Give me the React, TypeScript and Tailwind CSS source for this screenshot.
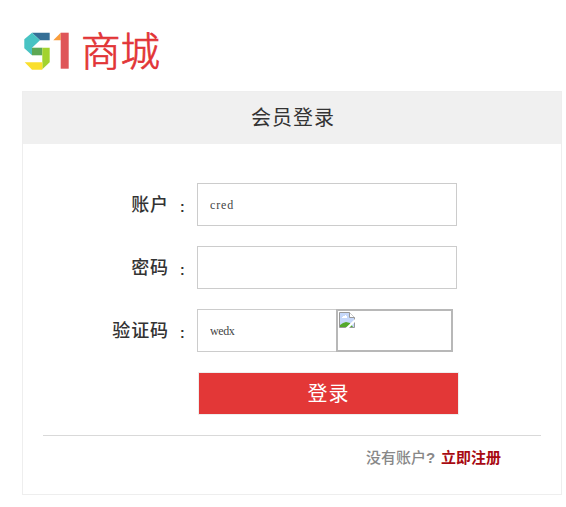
import React from "react";

const CJK = "font-['Liberation_Sans','Noto_Sans_CJK_SC',sans-serif]";

function Logo() {
  return (
    <svg width="146" height="48" viewBox="0 0 146 48" className="block">
      <polygon points="10,4.7 27.7,4.7 27.7,12.3 18,12.3" fill="#356f96" />
      <polygon points="10,4.7 18,12.3 10,19.7 10,27.3 2.3,20.3 2.3,11.3" fill="#48c3c3" />
      <rect x="10" y="19.7" width="10.3" height="7.6" fill="#5da854" />
      <polygon points="20.3,19.7 27.7,19.7 27.7,34.3 20.3,41.3" fill="#a2d32f" />
      <polygon points="2.7,34.3 20.3,34.3 20.3,41.7 10,41.7" fill="#fadf2c" />
      <polygon points="31.3,12.3 38.7,4.7 38.7,12.3" fill="#f99d3c" />
      <rect x="38.7" y="4.7" width="8" height="36" fill="#df5659" />
      <text
        x="59"
        y="37.5"
        fontSize="39.5"
        fontWeight="300"
        textLength="79"
        fill="#e23436"
        stroke="#e23436"
        strokeWidth="0.7"
        className={CJK}
      >
        商城
      </text>
    </svg>
  );
}

function Field({ label, children }: { label: string; children: React.ReactNode }) {
  return (
    <div className="flex h-[43px]">
      <div className="flex w-[146px] justify-end pt-[9px] text-[18px] leading-[27px] font-medium tracking-[0.9px] text-[#333]">
        {label}
      </div>
      <div className="w-[28px] pl-[11px] pt-[11px] text-[14px] leading-[27px] font-bold text-[#333]">:</div>
      {children}
    </div>
  );
}

function BrokenImage() {
  return (
    <div className="h-[43px] w-[117px] border-2 border-[#b8b8b8] p-px">
      <svg width="16" height="16" viewBox="0 0 16 16">
        <path d="M.5 .5h10l5 5v10H.5z" fill="#c6d8fa" stroke="#999" />
        <path d="M10.5 .5v5h5" fill="#fff" stroke="#999" />
        <path d="M3 6V5h1V4h2V3h1v1h1v2z" fill="#fff" />
        <path d="M1 15v-2l3-2 3-1 4 1 3 4z" fill="#54a92c" />
        <path d="M6.5 16L16 7v3l-6 6z" fill="#fff" />
      </svg>
    </div>
  );
}

export default function App() {
  return (
    <div className={`h-[507px] w-[566px] overflow-hidden bg-white pl-[22px] pt-[28px] ${CJK}`}>
      <div className="h-[63px]">
        <Logo />
      </div>
      <main className="h-[404px] w-[540px] border border-[#eee]">
        <h1 className="flex h-[52px] items-center justify-center bg-[#f0f0f0] pl-[2px] text-[20px] leading-[30px] font-normal tracking-[1px] text-[#333]">
          会员登录
        </h1>
        <form className="flex flex-col gap-[20px] pt-[39px]">
          <Field label="账户">
            <input
              defaultValue="cred"
              className="h-[43px] w-[260px] border border-[#ccc] px-[12px] pt-[2px] font-['Liberation_Serif',serif] text-[12px] tracking-[0.9px] text-[#444] outline-none"
            />
          </Field>
          <Field label="密码">
            <input type="password" className="h-[43px] w-[260px] border border-[#ccc] px-[12px] outline-none" />
          </Field>
          <Field label="验证码">
            <input
              defaultValue="wedx"
              className="h-[43px] w-[139px] border border-r-0 border-[#ccc] px-[12px] pt-[2px] font-['Liberation_Serif',serif] text-[12px] tracking-[-0.4px] text-[#444] outline-none"
            />
            <BrokenImage />
          </Field>
          <button
            type="button"
            className="ml-[175px] h-[43px] w-[261px] border border-[#eee] bg-[#e33737] text-[20px] leading-[30px] font-normal tracking-[1px] text-white"
          >
            登录
          </button>
        </form>
        <div className="mx-[20px] mt-[20px] flex border-t border-[#d9d9d9] pl-[323px] pt-[11px] text-[15px] leading-[22px] font-medium">
          <span className="w-[75px] text-[#888]">
            没有账户<b>?</b>
          </span>
          <a className="font-bold text-[#a80a12]">立即注册</a>
        </div>
      </main>
    </div>
  );
}
